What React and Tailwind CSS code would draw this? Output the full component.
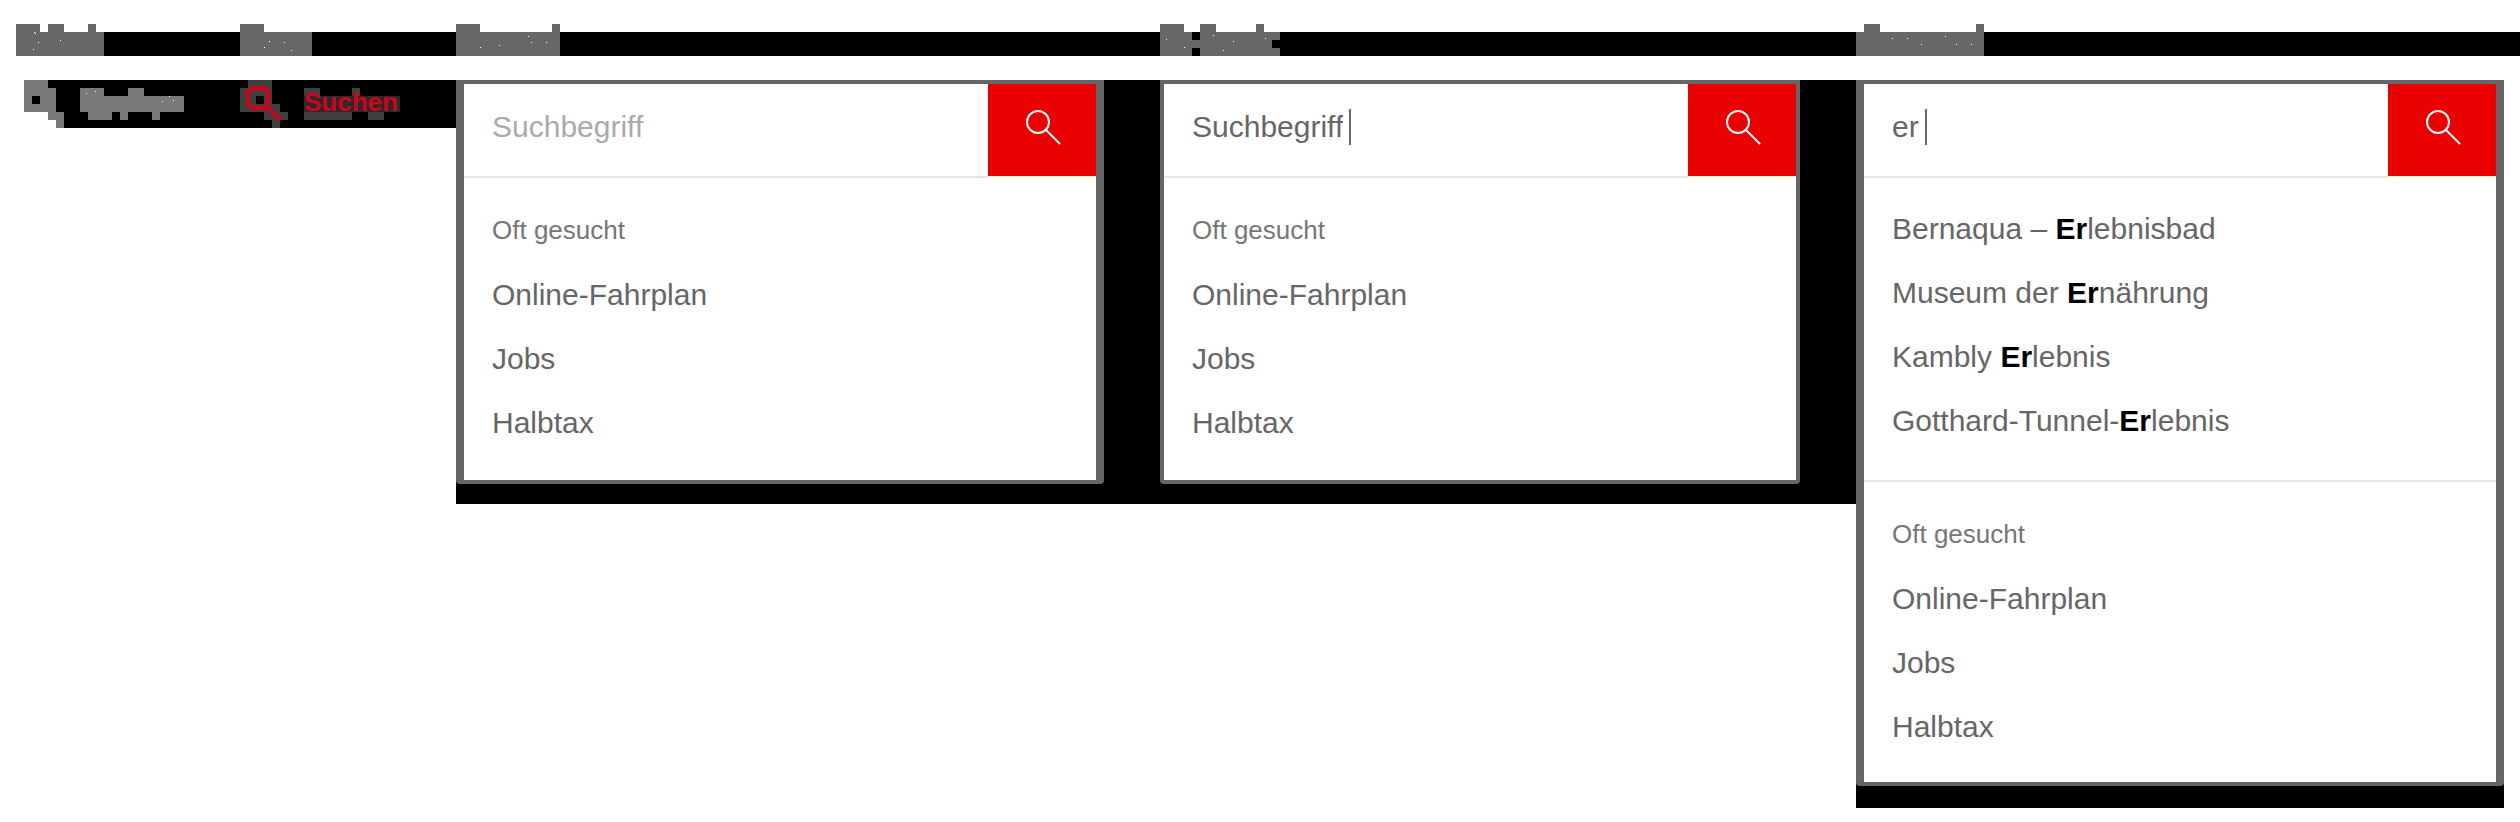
import React from "react";

const columns = "grid grid-cols-[224fr_216fr_704fr_696fr_664fr]";

/* Draws [x, y, width, height] boxes in one colour. */
function Blocks({ boxes, fill }) {
  return boxes.map(([x, y, w, h]) => (
    <rect key={`${x}-${y}`} x={x} y={y} width={w} height={h} fill={fill} />
  ));
}

const headings = [
  {
    boxes: [[0, 0, 24, 8], [32, 0, 16, 8], [72, 0, 8, 8], [0, 8, 88, 24]],
    specks: [[18, 8, 1, 1], [19, 9, 1, 1], [22, 18, 1, 1], [44, 16, 1, 1], [17, 25, 1, 1]],
  },
  {
    boxes: [[0, 0, 24, 8], [0, 8, 72, 24]],
    specks: [[24, 23, 1, 1], [44, 18, 1, 1], [51, 26, 1, 1], [29, 17, 1, 1]],
  },
  {
    boxes: [[0, 0, 24, 8], [96, 0, 8, 8], [0, 8, 104, 24]],
    specks: [[24, 23, 1, 1], [43, 21, 1, 1], [72, 12, 1, 1], [75, 18, 1, 1], [90, 18, 1, 1]],
  },
  {
    boxes: [
      [0, 0, 24, 8], [40, 0, 16, 8], [96, 0, 8, 8],
      [0, 8, 32, 24], [32, 16, 8, 8], [40, 8, 72, 24], [112, 8, 8, 8], [112, 24, 8, 8],
    ],
    specks: [[6, 15, 1, 1], [24, 23, 1, 1], [53, 11, 1, 1], [73, 17, 1, 1], [63, 26, 1, 1], [105, 14, 1, 1]],
  },
  {
    boxes: [[8, 0, 16, 8], [120, 0, 8, 8], [0, 8, 128, 24]],
    specks: [[36, 14, 1, 1], [51, 14, 1, 1], [65, 20, 1, 1], [89, 12, 1, 1], [100, 20, 1, 1], [115, 20, 1, 1]],
  },
];

function Heading({ boxes, specks }) {
  return (
    <svg className="-mt-2 block h-8 w-32" viewBox="0 0 128 32" shapeRendering="crispEdges" aria-hidden="true">
      <Blocks boxes={boxes} fill="#676767" />
      <Blocks boxes={specks} fill="#ffffff" />
    </svg>
  );
}

function DefaultTrigger() {
  return (
    <button type="button" aria-label="Suchen" className="block h-12">
      <svg className="block h-12 w-[168px]" viewBox="0 0 168 48" shapeRendering="crispEdges" aria-hidden="true">
        <Blocks fill="#ffffff" boxes={[[0, 0, 8, 48], [8, 32, 24, 8], [8, 40, 32, 8]]} />
        <Blocks
          fill="#7a7a7a"
          boxes={[
            [8, 0, 24, 8], [8, 8, 32, 24], [32, 32, 16, 8], [40, 40, 8, 8],
            [64, 8, 24, 8], [112, 8, 16, 8], [64, 16, 104, 16],
            [72, 32, 24, 8], [104, 32, 8, 8], [136, 32, 8, 8],
          ]}
        />
        <Blocks fill="#000000" boxes={[[16, 16, 8, 8]]} />
        <Blocks fill="#ffffff" boxes={[[70, 13, 1, 1], [79, 11, 1, 1], [146, 21, 1, 1], [153, 16, 1, 1], [157, 20, 1, 1]]} />
      </svg>
    </button>
  );
}

function HoverTrigger() {
  return (
    <button type="button" className="relative flex h-12 w-40 items-center pb-[5px] pl-16">
      <svg className="absolute inset-0 h-12 w-40" viewBox="0 0 160 48" aria-hidden="true">
        <Blocks
          fill="#3f3f3f"
          boxes={[
            [8, 0, 24, 8], [0, 8, 32, 24], [32, 24, 8, 8], [24, 32, 24, 8], [32, 40, 8, 8],
            [64, 8, 16, 8], [112, 8, 8, 8], [64, 32, 48, 8], [128, 32, 16, 8],
          ]}
        />
        <Blocks fill="#2a2a2a" boxes={[[64, 16, 96, 16]]} />
        <Blocks fill="#000000" boxes={[[16, 16, 8, 8]]} />
        <path
          d="M13 8h11l4 4v12l-4 4H13l-5-4V12zM27 27l14 13"
          fill="none"
          stroke="#d0021b"
          strokeWidth="4"
        />
      </svg>
      <span className="relative text-[26px] font-bold leading-8 text-[#d0021b]">Suchen</span>
    </button>
  );
}

function SearchIcon() {
  return (
    <svg className="h-9 w-9" viewBox="0 0 36 36" fill="none" stroke="#ffffff" strokeWidth="2" aria-hidden="true">
      <circle cx="13" cy="13" r="11" />
      <path d="M21 21 35 35" />
    </svg>
  );
}

function SearchBar({ value }) {
  const typed = value !== undefined;
  return (
    <form className="flex" onSubmit={(e) => e.preventDefault()}>
      <div className="flex h-[94px] min-w-0 flex-1 items-center border-b-2 border-[#e5e5e5] pb-1.5 pl-7">
        <input
          type="text"
          aria-label="Suchbegriff"
          placeholder="Suchbegriff"
          defaultValue={value}
          className={
            typed
              ? "h-12 field-sizing-content text-[30px] leading-[48px] text-[#666666] outline-none"
              : "h-12 w-full text-[30px] leading-[48px] outline-none placeholder:text-[#aaaaaa]"
          }
        />
        {typed && <span className="ml-1.5 h-9 w-0.5 bg-[#666666]" />}
      </div>
      <button
        type="submit"
        aria-label="Suchen"
        className="flex h-[94px] w-[108px] items-center justify-center border-b-2 border-[#fbf6d0] bg-[#eb0000] bg-clip-padding pb-1.5 pl-0.5"
      >
        <SearchIcon />
      </button>
    </form>
  );
}

function Row({ children }) {
  return (
    <li>
      <a href="#" className="block text-[30px] leading-[64px] text-[#666666]">{children}</a>
    </li>
  );
}

function Popular() {
  return (
    <section className="px-7 pt-[19px]">
      <h2 className="text-[26px] leading-[66px] text-[#767676]">Oft gesucht</h2>
      <ul>
        <Row>Online-Fahrplan</Row>
        <Row>Jobs</Row>
        <Row>Halbtax</Row>
      </ul>
    </section>
  );
}

const suggestions = [
  ["Bernaqua – ", "lebnisbad"],
  ["Museum der ", "nährung"],
  ["Kambly ", "lebnis"],
  ["Gotthard-Tunnel-", "lebnis"],
];

function Suggestions() {
  return (
    <ul className="border-b-2 border-[#e5e5e5] px-7 pt-[19px] pb-[27px]">
      {suggestions.map(([before, after]) => (
        <Row key={before}>
          {before}
          <b className="font-bold text-black">Er</b>
          {after}
        </Row>
      ))}
    </ul>
  );
}

export default function App() {
  return (
    <main className="bg-white pt-8 pl-4 font-['Liberation_Sans',Arial,sans-serif]">
      <div className={`${columns} h-6 bg-black`}>
        {headings.map((h, i) => (
          <Heading key={i} {...h} />
        ))}
      </div>

      <div className={`${columns} mt-6 items-start`}>
        <div className="bg-black">
          <DefaultTrigger />
        </div>
        <div className="bg-black">
          <HoverTrigger />
        </div>
        <div className="bg-black pr-14 pb-5">
          <div className="rounded-b border-x-8 border-y-4 border-[#666666] bg-white pb-[25px]">
            <SearchBar />
            <Popular />
          </div>
        </div>
        <div className="bg-black pr-14 pb-5">
          <div className="rounded-b border-4 border-[#666666] bg-white pb-[25px]">
            <SearchBar value="Suchbegriff" />
            <Popular />
          </div>
        </div>
        <div className="mr-4 bg-black pb-[22px]">
          <div className="rounded-b border-x-8 border-y-4 border-[#666666] bg-white pb-[23px]">
            <SearchBar value="er" />
            <Suggestions />
            <Popular />
          </div>
        </div>
      </div>
    </main>
  );
}
